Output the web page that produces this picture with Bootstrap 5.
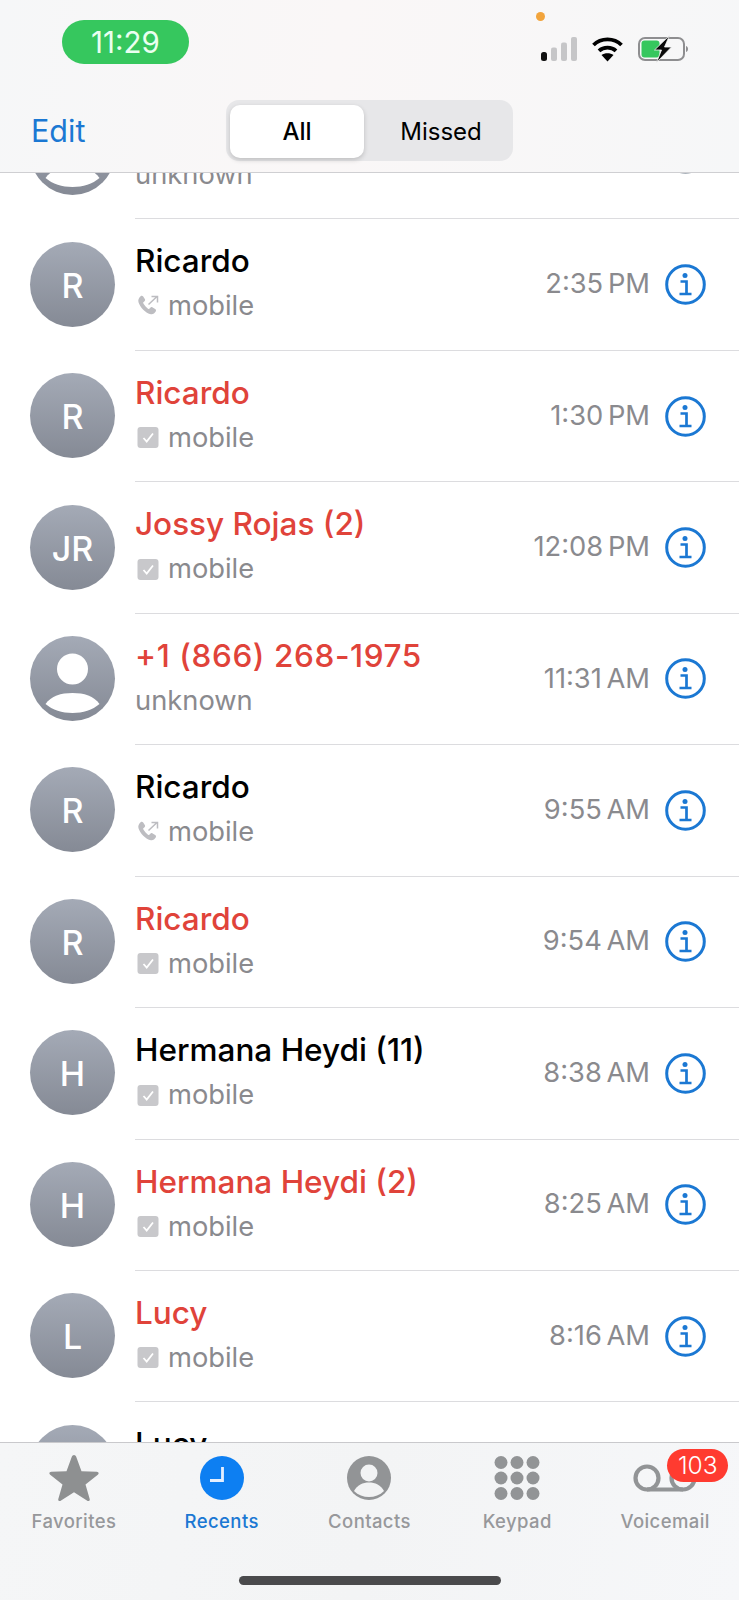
<!doctype html>
<html lang="en">
<head>
<meta charset="utf-8">
<title>Recents</title>
<link href="https://cdn.jsdelivr.net/npm/bootstrap@5.3.0/dist/css/bootstrap.min.css" rel="stylesheet">
<style>
html,body{margin:0;height:1600px;overflow:hidden;background:#fff}
body{font-family:Inter,"Liberation Sans",sans-serif;color:#000}
.phone{height:1600px;width:739px;overflow:hidden}
.topbar{height:173px;flex:none;background:linear-gradient(100deg,#f6f7f8,#faf7f7 45%,#f6f7f8);border-bottom:1px solid #cfcfd2;z-index:2}
.statusrow{height:100px;padding-left:62px;padding-right:50px}
.clockpill{width:127px;height:44px;margin-top:20px;border-radius:22px;background:#36c75e;color:#eafff0;font-size:29.5px;line-height:44px;font-weight:400;text-align:center}
.sysicons{margin-top:12px;width:148px}
.orangedot{width:9px;height:9px;border-radius:50%;background:#f2a43c;margin-left:-5px;margin-bottom:14px}
.navrow{height:72px;padding-left:31px}
.editlink{color:#1b78d3;font-size:30.5px;text-decoration:none;width:195px;line-height:34px;margin-top:14px}
.segctl{width:287px;height:61px;border-radius:13px;background:#e7e7e9;padding:5px 0 3px 4px}
.segbtn{border:0;border-radius:10px;height:53px;font-size:24px;color:#000;padding:0;background:transparent}
.segbtn.sel{width:134px;background:#fff;font-weight:500;box-shadow:0 2px 5px rgba(0,0,0,.18)}
.segbtn.unsel{width:149px;padding-left:5px;font-weight:400}
.listpane{flex:1 1 auto;overflow:hidden;min-height:0}
.calls{margin-top:-85px;border-radius:0}
.callrow{height:131.45px;padding:0;border:0;background:transparent;color:#000}
.avawrap{width:135px;flex:none;padding-left:30px;display:flex;align-items:center}
.ava{width:85px;height:85px;border-radius:50%;background:linear-gradient(180deg,#a4aab6,#858a95);color:#fff;font-size:34px;font-weight:500;overflow:hidden;padding-top:2px;margin-top:-2px}
.ava svg{display:block;margin-top:-2px}
.callbody{flex:1 1 auto;border-bottom:1px solid #dcdcdf;padding-right:33px;min-width:0}
.who{font-size:31.5px;line-height:36px;font-weight:500;margin-top:24px;white-space:nowrap;color:#000}
.who.miss{color:#e0433a}
.who.dialnum{letter-spacing:.6px}
.kind{font-size:27.3px;line-height:32px;color:#8a8a8e;margin-top:11px;white-space:nowrap}
.kind svg{margin-left:2px;margin-right:9px;flex:none}
.when{font-size:27.3px;color:#8a8a8e;white-space:nowrap;margin-right:15px;word-spacing:-3px}
.infoicon{flex:none;color:#1b78d3}
.peekicon{color:#8f9aa5}
.tabbar{height:158px;flex:none;background:linear-gradient(100deg,#f5f6f7,#f3f4f5 50%,#f6f7f9);border-top:1px solid #c9c9cc;z-index:2}
.tabitem{flex:1 1 0;padding-top:10px;color:#97989b;font-size:18.5px;letter-spacing:.4px;font-weight:500;text-decoration:none}
.tabitem.on{color:#1b78d3}
.tabicon{height:48px;margin-bottom:7px}
.vmbadge{position:absolute;left:76px;top:6px;width:61px;height:33px;border-radius:17px;background:#ff3b30;color:#fff;font-size:24.5px;font-weight:300;line-height:33px;letter-spacing:0;text-align:center}
.homebar{position:absolute;left:239px;bottom:15px;width:262px;height:9px;border-radius:5px;background:#4a4a4c;z-index:3}
</style>
</head>
<body>
<svg width="0" height="0" class="d-block" aria-hidden="true">
<defs>
<symbol id="i-info" viewBox="0 0 41 41">
<circle cx="20.5" cy="20.5" r="18.8" fill="none" stroke="currentColor" stroke-width="3"/>
<circle cx="20" cy="11.5" r="2.5" fill="currentColor"/>
<path d="M15.5 17.5h6v12.2M14.5 30h12" fill="none" stroke="currentColor" stroke-width="2.7"/>
</symbol>
<symbol id="i-out" viewBox="0 0 22 22">
<path d="M3.6 1.2c1-.7 2-.5 2.6.4l1.6 2.5c.5.8.4 1.6-.3 2.2l-1.1 1c-.3.2-.3.5-.2.8.7 1.5 3.4 5 5.3 5.8.3.1.6 0 .8-.2l1-1c.7-.7 1.5-.8 2.3-.3l2.6 1.5c.9.6 1.1 1.6.5 2.6-1 1.7-2.600 3-4.700 2.700C8.600 18.400 2.900 11.900 1.500 7.200.8 4.900 1.900 2.500 3.600 1.200z" fill="#bdbdc1"/>
<path d="M11.500 9.500L20 1.500M14.500 1.500H20.500V7.500" fill="none" stroke="#bdbdc1" stroke-width="1.500"/>
</symbol>
<symbol id="i-chk" viewBox="0 0 21 21">
<rect width="21" height="21" rx="3" fill="#c8c8cb"/>
<path d="M6 11l3.200 3.500L15.500 6.500" fill="none" stroke="#fff" stroke-width="1.800"/>
</symbol>
<symbol id="i-person" viewBox="0 0 85 85">
<circle cx="42.500" cy="33" r="15.500" fill="#fff"/>
<path d="M15.500 68C21 60 31 57 42.500 57S64 60 69.500 68C62.500 74 53 77 42.500 77S22.500 74 15.500 68z" fill="#fff"/>
</symbol>
</defs>
</svg>
<div class="phone d-flex flex-column position-relative">
  <header class="topbar">
    <div class="statusrow d-flex justify-content-between">
      <div class="clockpill">11:29</div>
      <div class="sysicons">
        <div class="orangedot"></div>
        <svg width="148" height="28" viewBox="0 -2 148 28" class="d-block">
          <rect x="0" y="15" width="6" height="9" rx="2.500" fill="#111"/>
          <rect x="10" y="10.500" width="6" height="13.500" rx="2" fill="#c6c6c8"/>
          <rect x="20" y="5.500" width="6" height="18.500" rx="2" fill="#c6c6c8"/>
          <rect x="30" y="0" width="6" height="24" rx="2" fill="#c6c6c8"/>
          <g fill="none" stroke="#000" stroke-width="3.800">
            <path d="M52.500 8C60 .5 73 .5 80.500 8"/>
            <path d="M58 13.800C62.500 9.500 70.500 9.500 75 13.800"/>
          </g>
          <path d="M60.500 18c3.200-2.500 8.800-2.500 12 0L66.500 24.500z" fill="#000"/>
          <rect x="98" y="1" width="45" height="22" rx="6" fill="none" stroke="#8e8e90" stroke-width="2"/>
          <rect x="100.500" y="3.500" width="18" height="17" rx="3" fill="#36c75e"/>
          <path d="M145 9v6c1.500-.5 2-1.700 2-3s-.5-2.500-2-3z" fill="#8e8e90"/>
          <path d="M128.500 -1.500L113.500 13h7l-5 12.500L130.500 10h-7z" fill="#0a0a0a" stroke="#f6f7f8" stroke-width=".8"/>
        </svg>
      </div>
    </div>
    <div class="navrow d-flex align-items-start">
      <a class="editlink" href="#">Edit</a>
      <div class="segctl d-flex" role="group">
        <button type="button" class="btn segbtn sel">All</button>
        <button type="button" class="btn segbtn unsel">Missed</button>
      </div>
    </div>
  </header>

  <main class="listpane">
    <ul class="list-group list-group-flush calls">
      <li class="list-group-item callrow d-flex">
        <div class="avawrap"><div class="ava"><svg width="85" height="85"><use href="#i-person"/></svg></div></div>
        <div class="callbody d-flex align-items-center">
          <div class="flex-grow-1 align-self-start"><div class="who">&nbsp;</div><div class="kind">unknown</div></div>
          <svg class="infoicon peekicon" width="41" height="41"><use href="#i-info"/></svg>
        </div>
      </li>
      <li class="list-group-item callrow d-flex">
        <div class="avawrap"><div class="ava d-flex align-items-center justify-content-center">R</div></div>
        <div class="callbody d-flex align-items-center">
          <div class="flex-grow-1 align-self-start"><div class="who">Ricardo</div><div class="kind d-flex align-items-center"><svg width="22" height="22"><use href="#i-out"/></svg>mobile</div></div>
          <div class="when">2:35 PM</div>
          <svg class="infoicon" width="41" height="41"><use href="#i-info"/></svg>
        </div>
      </li>
      <li class="list-group-item callrow d-flex">
        <div class="avawrap"><div class="ava d-flex align-items-center justify-content-center">R</div></div>
        <div class="callbody d-flex align-items-center">
          <div class="flex-grow-1 align-self-start"><div class="who miss">Ricardo</div><div class="kind d-flex align-items-center"><svg width="22" height="21"><use href="#i-chk"/></svg>mobile</div></div>
          <div class="when">1:30 PM</div>
          <svg class="infoicon" width="41" height="41"><use href="#i-info"/></svg>
        </div>
      </li>
      <li class="list-group-item callrow d-flex">
        <div class="avawrap"><div class="ava d-flex align-items-center justify-content-center">JR</div></div>
        <div class="callbody d-flex align-items-center">
          <div class="flex-grow-1 align-self-start"><div class="who miss">Jossy Rojas (2)</div><div class="kind d-flex align-items-center"><svg width="22" height="21"><use href="#i-chk"/></svg>mobile</div></div>
          <div class="when">12:08 PM</div>
          <svg class="infoicon" width="41" height="41"><use href="#i-info"/></svg>
        </div>
      </li>
      <li class="list-group-item callrow d-flex">
        <div class="avawrap"><div class="ava"><svg width="85" height="85"><use href="#i-person"/></svg></div></div>
        <div class="callbody d-flex align-items-center">
          <div class="flex-grow-1 align-self-start"><div class="who miss dialnum">+1 (866) 268-1975</div><div class="kind">unknown</div></div>
          <div class="when">11:31 AM</div>
          <svg class="infoicon" width="41" height="41"><use href="#i-info"/></svg>
        </div>
      </li>
      <li class="list-group-item callrow d-flex">
        <div class="avawrap"><div class="ava d-flex align-items-center justify-content-center">R</div></div>
        <div class="callbody d-flex align-items-center">
          <div class="flex-grow-1 align-self-start"><div class="who">Ricardo</div><div class="kind d-flex align-items-center"><svg width="22" height="22"><use href="#i-out"/></svg>mobile</div></div>
          <div class="when">9:55 AM</div>
          <svg class="infoicon" width="41" height="41"><use href="#i-info"/></svg>
        </div>
      </li>
      <li class="list-group-item callrow d-flex">
        <div class="avawrap"><div class="ava d-flex align-items-center justify-content-center">R</div></div>
        <div class="callbody d-flex align-items-center">
          <div class="flex-grow-1 align-self-start"><div class="who miss">Ricardo</div><div class="kind d-flex align-items-center"><svg width="22" height="21"><use href="#i-chk"/></svg>mobile</div></div>
          <div class="when">9:54 AM</div>
          <svg class="infoicon" width="41" height="41"><use href="#i-info"/></svg>
        </div>
      </li>
      <li class="list-group-item callrow d-flex">
        <div class="avawrap"><div class="ava d-flex align-items-center justify-content-center">H</div></div>
        <div class="callbody d-flex align-items-center">
          <div class="flex-grow-1 align-self-start"><div class="who">Hermana Heydi (11)</div><div class="kind d-flex align-items-center"><svg width="22" height="21"><use href="#i-chk"/></svg>mobile</div></div>
          <div class="when">8:38 AM</div>
          <svg class="infoicon" width="41" height="41"><use href="#i-info"/></svg>
        </div>
      </li>
      <li class="list-group-item callrow d-flex">
        <div class="avawrap"><div class="ava d-flex align-items-center justify-content-center">H</div></div>
        <div class="callbody d-flex align-items-center">
          <div class="flex-grow-1 align-self-start"><div class="who miss">Hermana Heydi (2)</div><div class="kind d-flex align-items-center"><svg width="22" height="21"><use href="#i-chk"/></svg>mobile</div></div>
          <div class="when">8:25 AM</div>
          <svg class="infoicon" width="41" height="41"><use href="#i-info"/></svg>
        </div>
      </li>
      <li class="list-group-item callrow d-flex">
        <div class="avawrap"><div class="ava d-flex align-items-center justify-content-center">L</div></div>
        <div class="callbody d-flex align-items-center">
          <div class="flex-grow-1 align-self-start"><div class="who miss">Lucy</div><div class="kind d-flex align-items-center"><svg width="22" height="21"><use href="#i-chk"/></svg>mobile</div></div>
          <div class="when">8:16 AM</div>
          <svg class="infoicon" width="41" height="41"><use href="#i-info"/></svg>
        </div>
      </li>
      <li class="list-group-item callrow d-flex">
        <div class="avawrap"><div class="ava d-flex align-items-center justify-content-center">L</div></div>
        <div class="callbody d-flex align-items-center">
          <div class="flex-grow-1 align-self-start"><div class="who">Lucy</div></div>
        </div>
      </li>
    </ul>
  </main>

  <nav class="tabbar d-flex">
    <a class="tabitem d-flex flex-column align-items-center" href="#">
      <svg class="tabicon" width="50" height="48" viewBox="0 0 50 48"><path d="M25 2c1 0 1.700.7 2.200 1.800l5.300 14.400 15.200.6c2 .1 2.600 1.700 1.100 3L36.500 31.400l4.200 14.500c.5 1.800-.9 2.800-2.400 1.800L25 39.300 11.700 47.700c-1.500 1-2.900 0-2.400-1.800l4.200-14.500L1.200 21.800c-1.500-1.300-.9-2.900 1.100-3l15.200-.6L22.800 3.800C23.300 2.700 24 2 25 2z" fill="#8e9091"/></svg>
      <span>Favorites</span>
    </a>
    <a class="tabitem on d-flex flex-column align-items-center" href="#">
      <svg class="tabicon" width="44" height="48" viewBox="0 0 44 48"><circle cx="22" cy="25" r="22" fill="#0d7ff2"/><path d="M22.500 14v13.500H10" fill="none" stroke="#e4efff" stroke-width="2.800"/></svg>
      <span>Recents</span>
    </a>
    <a class="tabitem d-flex flex-column align-items-center" href="#">
      <svg class="tabicon" width="44" height="48" viewBox="0 0 44 48"><circle cx="22" cy="25" r="22" fill="#929496"/><circle cx="22" cy="20" r="8.500" fill="#f2f3f4"/><path d="M7 38c3-6 9-8.500 15-8.500S34 32 37 38c-4 4-9.500 6-15 6S11 42 7 38z" fill="#f2f3f4"/></svg>
      <span>Contacts</span>
    </a>
    <a class="tabitem d-flex flex-column align-items-center" href="#">
      <svg class="tabicon" width="46" height="48" viewBox="0 0 46 48" fill="#929496"><circle cx="7" cy="9.500" r="6.500"/><circle cx="23" cy="9.500" r="6.500"/><circle cx="39" cy="9.500" r="6.500"/><circle cx="7" cy="25" r="6.500"/><circle cx="23" cy="25" r="6.500"/><circle cx="39" cy="25" r="6.500"/><circle cx="7" cy="40.500" r="6.500"/><circle cx="23" cy="40.500" r="6.500"/><circle cx="39" cy="40.500" r="6.500"/></svg>
      <span>Keypad</span>
    </a>
    <a class="tabitem d-flex flex-column align-items-center position-relative" href="#">
      <svg class="tabicon" width="64" height="48" viewBox="0 0 64 48" fill="none" stroke="#929496" stroke-width="4.200"><circle cx="14" cy="25" r="11.500"/><circle cx="50" cy="25" r="11.500"/><path d="M14 36.500h36"/></svg>
      <span>Voicemail</span>
      <span class="vmbadge">103</span>
    </a>
  </nav>
  <div class="homebar"></div>
</div>
<script src="https://cdn.jsdelivr.net/npm/bootstrap@5.3.0/dist/js/bootstrap.bundle.min.js"></script>
</body>
</html>
